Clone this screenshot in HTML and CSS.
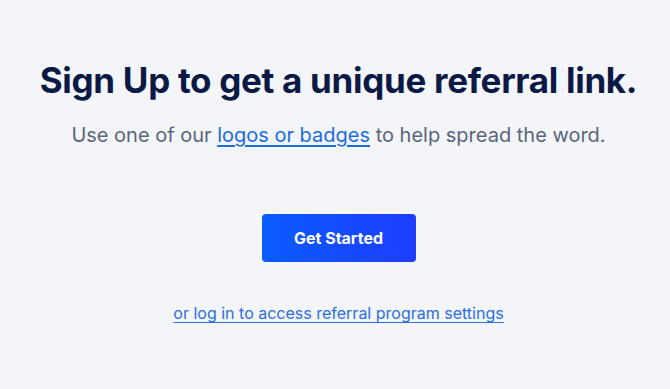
FILE: index.html
```html
<!DOCTYPE html>
<html lang="en">
<head>
    <meta charset="UTF-8">
    <meta name="viewport" content="width=device-width, initial-scale=1.0">
    <title>Referral Program</title>
    <link rel="stylesheet" href="styles.css">
</head>
<body>
    <main class="referral">
        <h1 class="title">Sign Up to get a unique referral link.</h1>
        <p class="subtitle">Use one of our <a href="#" class="inline-link">logos or badges</a> to help spread the word.</p>
        <a href="#" class="cta">Get Started</a>
        <a href="#" class="login-link">or log in to access referral program settings</a>
    </main>
</body>
</html>
```

FILE: styles.css
```css
* {
    margin: 0;
    padding: 0;
    box-sizing: border-box;
}
html, body {
    height: 100%;
    background-color: #f3f5f9;
    font-family: Inter, "Noto Sans", Arial, sans-serif;
}
.referral {
    display: flex;
    flex-direction: column;
    align-items: center;
    text-align: center;
    padding-top: 58px;
    padding-left: 7px;
}
.title {
    font-size: 35px;
    font-weight: 700;
    color: #0b1a45;
    letter-spacing: -0.3px;
    line-height: 44px;
}
.subtitle {
    margin-top: 19px;
    font-size: 20px;
    color: #5b6579;
    line-height: 28px;
}
.inline-link {
    color: #1b6ce0;
    text-decoration: underline;
    text-underline-offset: 3px;
}
.cta {
    margin-top: 65px;
    width: 154px;
    height: 48px;
    display: flex;
    align-items: center;
    justify-content: center;
    background: linear-gradient(90deg, #0a5cff, #1e3dff);
    border-radius: 4px;
    color: #fff;
    font-size: 16px;
    font-weight: 700;
    text-decoration: none;
}
.login-link {
    margin-top: 40px;
    font-size: 16px;
    line-height: 22px;
    color: #2a6ee0;
    text-decoration: underline;
    text-underline-offset: 3px;
}
```
